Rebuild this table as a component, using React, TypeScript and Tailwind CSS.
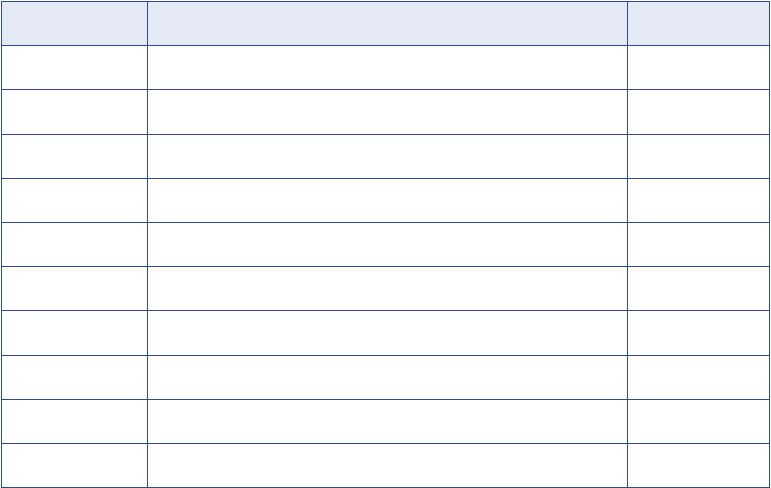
import React from 'react';

const rowHeights = [44, 45, 44, 44, 44, 44, 45, 44, 44, 44];

const Cell = ({ header, h }: { header?: boolean; h: number }) => (
  <div
    style={{ height: h }}
    className={`border-r border-b border-[#2a4b96] ${header ? 'bg-[#e4e9f5]' : 'bg-white'}`}
  />
);

export default function App() {
  return (
    <div className="w-[771px] h-[488px] bg-white p-px font-['Liberation_Sans',sans-serif]">
      <div className="grid grid-cols-[146px_480px_142px] border-l border-t border-[#2a4b96]">
        {/* header */}
        <Cell header h={44} />
        <Cell header h={44} />
        <Cell header h={44} />
        {/* body rows */}
        {rowHeights.map((h, i) => (
          <React.Fragment key={i}>
            <Cell h={h} />
            <Cell h={h} />
            <Cell h={h} />
          </React.Fragment>
        ))}
      </div>
    </div>
  );
}
